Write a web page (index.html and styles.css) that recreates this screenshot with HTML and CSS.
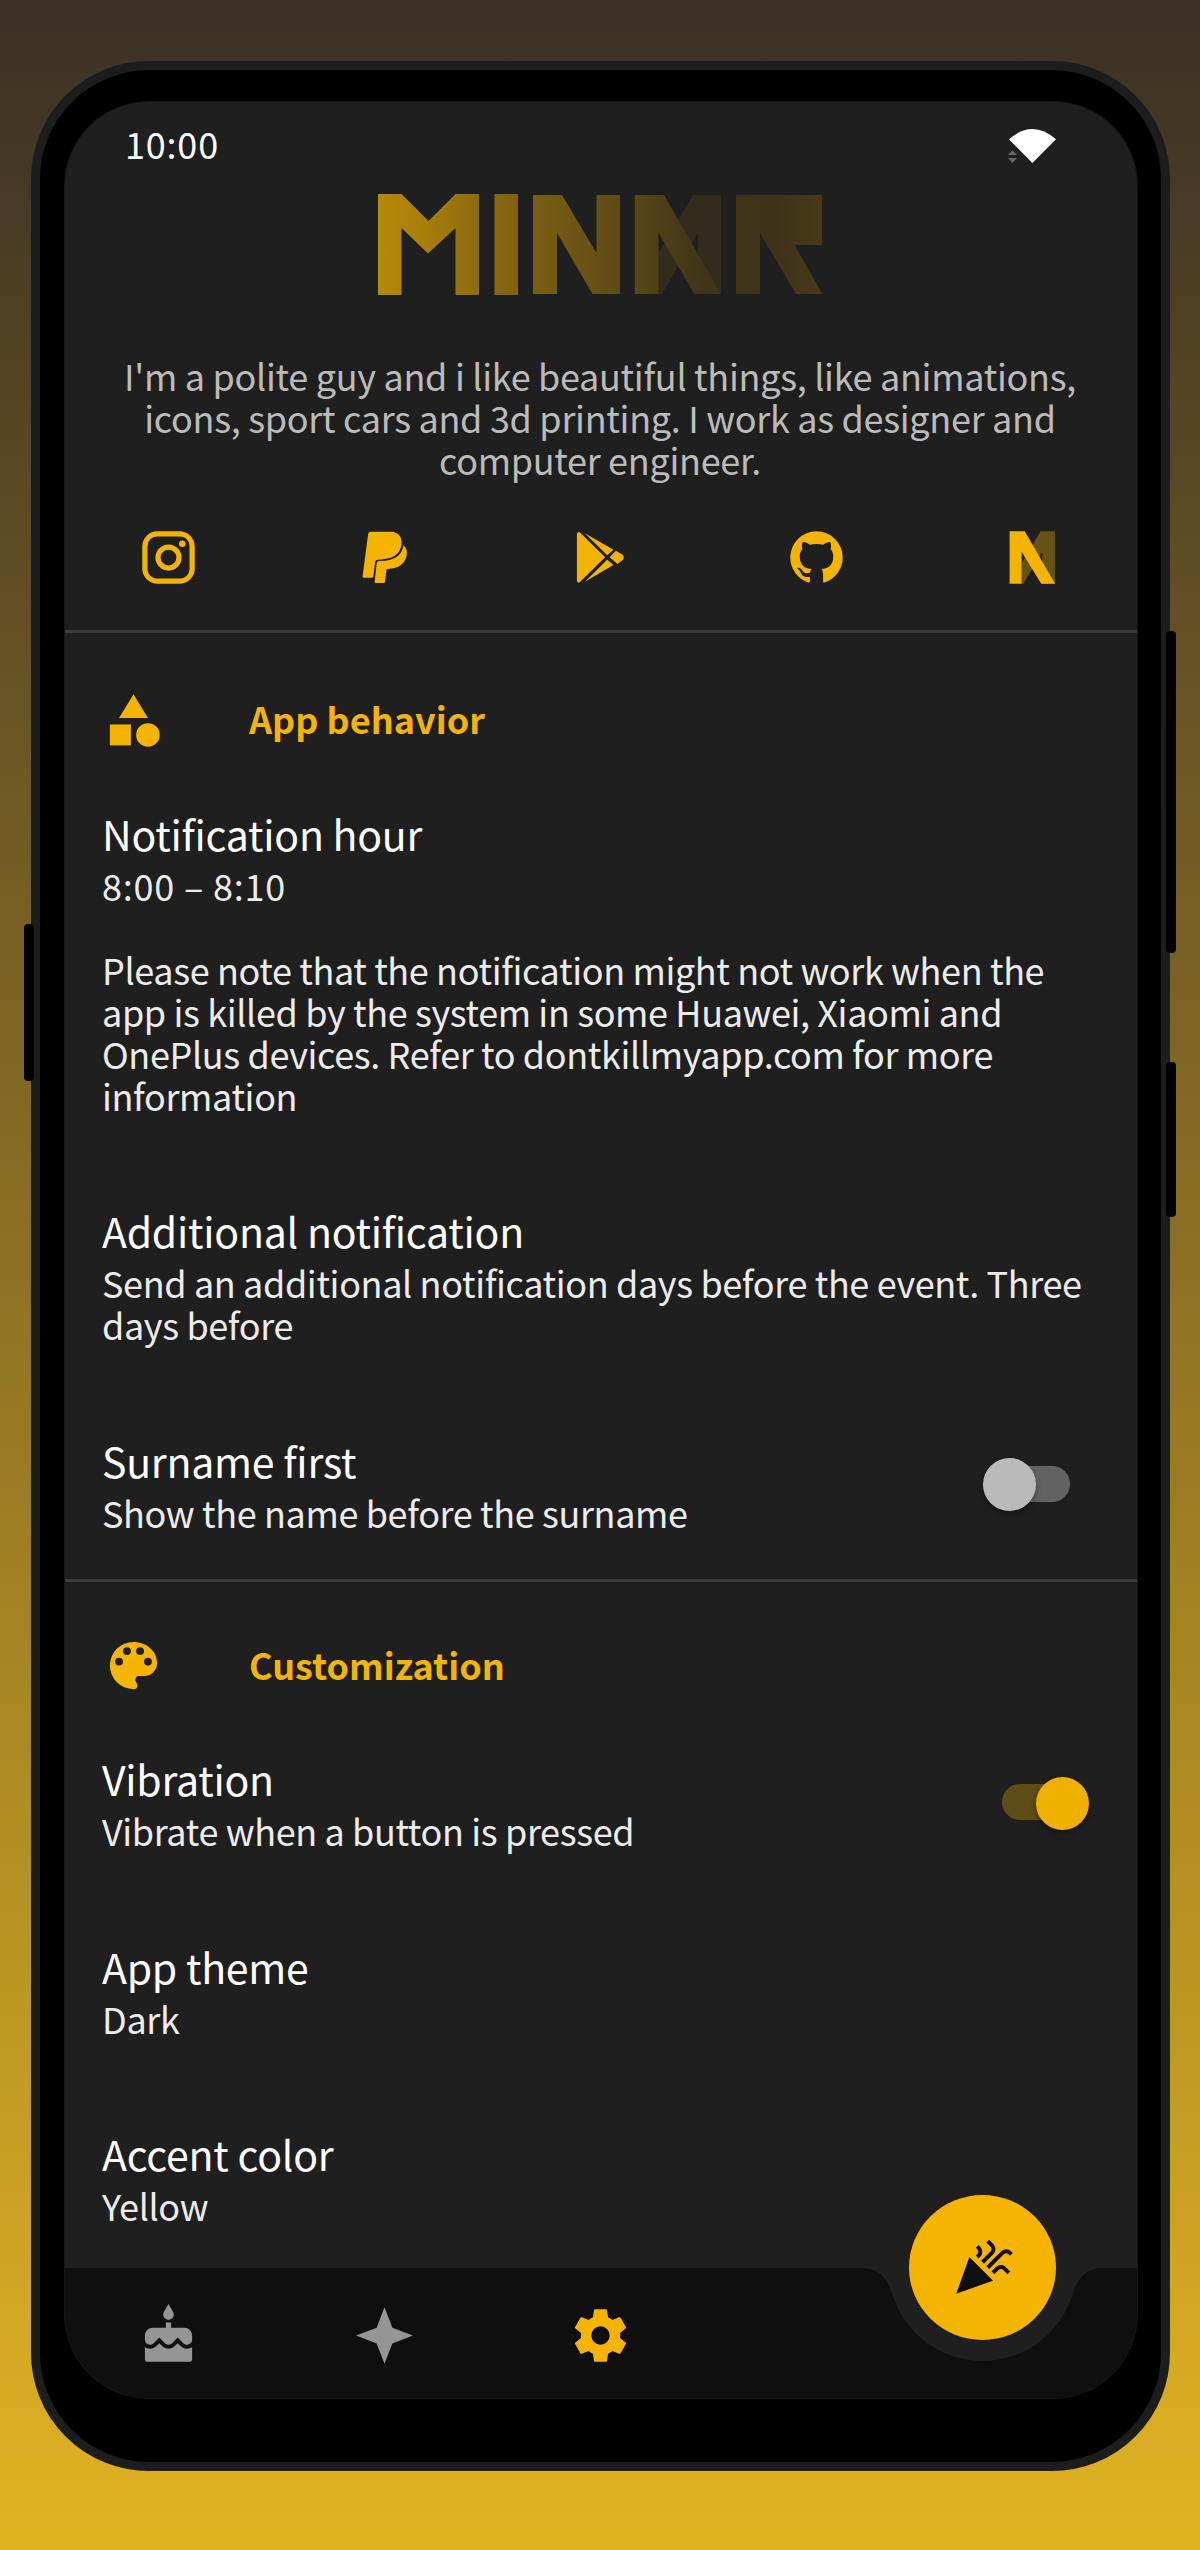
FILE: index.html
```html
<!DOCTYPE html>
<html lang="en">
<head>
<meta charset="utf-8">
<title>Settings</title>
<link rel="stylesheet" href="styles.css">
</head>
<body>
<div class="phone">
  <span class="key key-left"></span>
  <span class="key key-volume"></span>
  <span class="key key-power"></span>
  <div class="screen">
    <header class="status">
      <span class="clock">10:00</span>
      <svg class="wifi" viewBox="0 0 50 36"><path d="M4 11.3Q27.4 -9.3 51 11.3L27.4 35Z" fill="#fff"/><path d="M7.5 22.3L12 27H3ZM7.5 35L12 30H3Z" fill="#666"/></svg>
    </header>

    <svg class="logo" viewBox="378 194 444 101">
      <defs>
        <linearGradient id="gold" gradientUnits="userSpaceOnUse" x1="378" y1="0" x2="822" y2="0">
          <stop offset="0" stop-color="#b5880a"/>
          <stop offset=".1" stop-color="#a97f0b"/>
          <stop offset=".23" stop-color="#8c6a0f"/>
          <stop offset=".53" stop-color="#604c17"/>
          <stop offset=".73" stop-color="#40351a"/>
          <stop offset=".9" stop-color="#3e331a"/>
          <stop offset="1" stop-color="#483a19"/>
        </linearGradient>
      </defs>
      <path d="M721 195H693L658.500 253V294H662L698 233V294H721Z" fill="#332c1c"/>
      <g fill="url(#gold)">
        <path d="M378 194H401.500L428.500 221L455.500 194H479V295H455.500V228L428 253.500L401.500 228V295H378Z"/>
        <path d="M494.500 194H518V295H494.500Z"/>
        <path d="M533 195H562L596.500 253V195H620V294H592.500L557 233V294H533Z"/>
        <path d="M634.800 195H664L721 294H694.500L658.500 233V294H634.800Z"/>
        <path d="M736 195H822V245H794.500L822.500 294H796L760 233V294H736Z"/>
      </g>
    </svg>

    <p class="bio">I'm a polite guy and i like beautiful things, like animations,<br>icons, sport cars and 3d printing. I work as designer and<br>computer engineer.</p>

    <nav class="social">
      <svg class="icon" viewBox="0 0 24 24"><path d="M7.800 2H16.200C19.400 2 22 4.600 22 7.800V16.200A5.800 5.800 0 0 1 16.200 22H7.800C4.600 22 2 19.400 2 16.200V7.800A5.800 5.800 0 0 1 7.800 2M7.600 4A3.600 3.600 0 0 0 4 7.600V16.400C4 18.390 5.610 20 7.600 20H16.400A3.600 3.600 0 0 0 20 16.400V7.600C20 5.610 18.390 4 16.400 4H7.600M17.250 5.500A1.250 1.250 0 0 1 18.500 6.750A1.250 1.250 0 0 1 17.250 8A1.250 1.250 0 0 1 16 6.750A1.250 1.250 0 0 1 17.250 5.500M12 7A5 5 0 0 1 17 12A5 5 0 0 1 12 17A5 5 0 0 1 7 12A5 5 0 0 1 12 7M12 9A3 3 0 0 0 9 12A3 3 0 0 0 12 15A3 3 0 0 0 15 12A3 3 0 0 0 12 9Z"/></svg>
      <svg class="icon" viewBox="675 48 183 189" preserveAspectRatio="none"><path d="M727 65H785C808 66 818 82 816 102C812 135 790 148 748 149Q740 149 739 158L734 200Q733 203 730 203H706Q702 203 703 199L719 71Q720 65 727 65Z"/><path d="M822 106Q834 118 831 136C826 164 805 176 776 177Q773 177 772 181L768 216Q767 219 764 219H741Q737 219 738 215L744 158Q745 153 752 153C785 154 816 143 822 106Z"/></svg>
      <svg class="icon" viewBox="1302 48 183 189" preserveAspectRatio="none"><path d="M1330 66Q1325 68 1325 73V212Q1325 217 1330 218Q1333 218 1336 214L1407 142L1336 70Q1333 66 1330 66ZM1348 70L1431 119L1413 136ZM1348 215L1431 165L1413 149ZM1438 122L1458 134Q1464 142 1458 150L1443 162L1420 142Z"/></svg>
      <svg class="icon" viewBox="0 0 24 24"><path d="M12 2A10 10 0 0 0 2 12C2 16.420 4.870 20.170 8.840 21.500C9.340 21.580 9.500 21.270 9.500 21C9.500 20.770 9.500 20.140 9.500 19.310C6.730 19.910 6.140 17.970 6.140 17.970C5.680 16.810 5.030 16.500 5.030 16.500C4.120 15.880 5.100 15.900 5.100 15.900C6.100 15.970 6.630 16.930 6.630 16.930C7.500 18.450 8.970 18 9.540 17.760C9.630 17.110 9.890 16.670 10.170 16.420C7.950 16.170 5.620 15.310 5.620 11.500C5.620 10.390 6 9.500 6.650 8.790C6.550 8.540 6.200 7.500 6.750 6.150C6.750 6.150 7.590 5.880 9.500 7.170C10.290 6.950 11.150 6.840 12 6.840C12.850 6.840 13.710 6.950 14.500 7.170C16.410 5.880 17.250 6.150 17.250 6.150C17.800 7.500 17.450 8.540 17.350 8.790C18 9.500 18.380 10.390 18.380 11.500C18.380 15.320 16.040 16.160 13.810 16.410C14.170 16.720 14.500 17.330 14.500 18.260C14.500 19.600 14.500 20.680 14.500 21C14.500 21.270 14.660 21.590 15.170 21.500C19.140 20.160 22 16.420 22 12A10 10 0 0 0 12 2Z"/></svg>
      <svg class="icon" viewBox="1163 48 183 189" preserveAspectRatio="none"><path d="M1320 64H1278L1223 160V221H1228L1283 125V221H1320Z" fill="#655214"/><path d="M1188 64H1232L1320 221H1280L1223 125V221H1188Z"/></svg>
    </nav>

    <section class="group group-first">
      <h2 class="group-head">
        <svg class="icon" viewBox="0 0 24 24"><path d="M12 2L6.500 11H17.500Z"/><circle cx="17.500" cy="17.500" r="4.500"/><path d="M3 13.500H11V21.500H3Z"/></svg>
        <span class="group-name">App behavior</span>
      </h2>
      <div class="row"><div class="copy">
        <h3>Notification hour</h3>
        <p><span class="time">8:00 – 8:10</span><br><br>Please note that the notification might not work when the<br>app is killed by the system in some Huawei, Xiaomi and<br>OnePlus devices. Refer to dontkillmyapp.com for more<br>information</p>
      </div></div>
      <div class="row"><div class="copy">
        <h3>Additional notification</h3>
        <p>Send an additional notification days before the event. Three<br>days before</p>
      </div></div>
      <div class="row"><div class="copy">
        <h3>Surname first</h3>
        <p>Show the name before the surname</p>
      </div><span class="switch off"><i class="thumb"></i></span></div>
    </section>

    <section class="group group-last">
      <h2 class="group-head">
        <svg class="icon" viewBox="0 0 24 24"><path d="M17.500 12A1.500 1.500 0 0 1 16 10.500A1.500 1.500 0 0 1 17.500 9A1.500 1.500 0 0 1 19 10.500A1.500 1.500 0 0 1 17.500 12M14.500 8A1.500 1.500 0 0 1 13 6.500A1.500 1.500 0 0 1 14.500 5A1.500 1.500 0 0 1 16 6.500A1.500 1.500 0 0 1 14.500 8M9.500 8A1.500 1.500 0 0 1 8 6.500A1.500 1.500 0 0 1 9.500 5A1.500 1.500 0 0 1 11 6.500A1.500 1.500 0 0 1 9.500 8M6.500 12A1.500 1.500 0 0 1 5 10.500A1.500 1.500 0 0 1 6.500 9A1.500 1.500 0 0 1 8 10.500A1.500 1.500 0 0 1 6.500 12M12 3A9 9 0 0 0 3 12A9 9 0 0 0 12 21A1.500 1.500 0 0 0 13.500 19.500C13.500 19.110 13.350 18.760 13.110 18.500C12.880 18.230 12.730 17.880 12.730 17.500A1.500 1.500 0 0 1 14.230 16H16A5 5 0 0 0 21 11C21 6.580 16.970 3 12 3Z"/></svg>
        <span class="group-name">Customization</span>
      </h2>
      <div class="row"><div class="copy">
        <h3>Vibration</h3>
        <p>Vibrate when a button is pressed</p>
      </div><span class="switch on"><i class="thumb"></i></span></div>
      <div class="row"><div class="copy">
        <h3>App theme</h3>
        <p>Dark</p>
      </div></div>
      <div class="row"><div class="copy">
        <h3>Accent color</h3>
        <p>Yellow</p>
      </div></div>
    </section>

    <footer class="tabs">
      <svg class="tabs-shape" viewBox="65 2268 1072 130"><path d="M65 2268H862C879 2268 888 2279 892.500 2295A94.400 94.400 0 0 0 1072.500 2295C1077 2279 1086 2268 1103 2268H1137V2398H65Z"/></svg>
      <svg class="icon" viewBox="0 0 24 24"><path d="M12 6C13.110 6 14 5.100 14 4C14 3.620 13.900 3.270 13.710 2.970L12 0L10.290 2.970C10.100 3.270 10 3.620 10 4C10 5.100 10.900 6 12 6M16.600 16L15.530 14.920L14.450 16C13.150 17.290 10.870 17.300 9.560 16L8.500 14.920L7.400 16C6.750 16.640 5.880 17 4.960 17C4.230 17 3.560 16.770 3 16.390V21C3 21.550 3.450 22 4 22H20C20.550 22 21 21.550 21 21V16.390C20.440 16.770 19.770 17 19.040 17C18.120 17 17.250 16.640 16.600 16M18 9H13V7H11V9H6C4.340 9 3 10.340 3 12V13.540C3 14.620 3.880 15.500 4.960 15.500C5.500 15.500 6 15.300 6.340 14.930L8.500 12.800L10.610 14.930C11.350 15.670 12.640 15.670 13.380 14.930L15.500 12.800L17.650 14.930C18 15.300 18.500 15.500 19.030 15.500C20.110 15.500 21 14.620 21 13.540V12C21 10.340 19.660 9 18 9Z"/></svg>
      <svg class="icon" viewBox="0 0 24 24"><path d="M12 1.200L15 9L22.800 12L15 15L12 22.800L9 15L1.200 12L9 9Z"/></svg>
      <svg class="icon active" viewBox="0 0 24 24"><path d="M12 15.500A3.500 3.500 0 0 1 8.500 12A3.500 3.500 0 0 1 12 8.500A3.500 3.500 0 0 1 15.500 12A3.500 3.500 0 0 1 12 15.500M19.430 12.970C19.470 12.650 19.500 12.330 19.500 12C19.500 11.670 19.470 11.340 19.430 11L21.540 9.370C21.730 9.220 21.780 8.950 21.660 8.730L19.660 5.270C19.540 5.050 19.270 4.960 19.050 5.050L16.560 6.050C16.040 5.660 15.500 5.320 14.870 5.070L14.500 2.420C14.460 2.180 14.250 2 14 2H10C9.750 2 9.540 2.180 9.500 2.420L9.130 5.070C8.500 5.320 7.960 5.660 7.440 6.050L4.950 5.050C4.730 4.960 4.460 5.050 4.340 5.270L2.340 8.730C2.210 8.950 2.270 9.220 2.460 9.370L4.570 11C4.530 11.340 4.500 11.670 4.500 12C4.500 12.330 4.530 12.650 4.570 12.970L2.460 14.630C2.270 14.780 2.210 15.050 2.340 15.270L4.340 18.730C4.460 18.950 4.730 19.030 4.950 18.950L7.440 17.940C7.960 18.340 8.500 18.680 9.130 18.930L9.500 21.580C9.540 21.820 9.750 22 10 22H14C14.250 22 14.460 21.820 14.500 21.580L14.870 18.930C15.500 18.670 16.040 18.340 16.560 17.940L19.050 18.950C19.270 19.030 19.540 18.950 19.660 18.730L21.660 15.270C21.780 15.050 21.730 14.780 21.540 14.630L19.430 12.970Z"/></svg>
      <span class="fab">
        <svg class="icon" viewBox="0 0 24 24"><path d="M2 22L16 17L7 8ZM14.530 12.530l5.590-5.590c.49-.49 1.280-.49 1.770 0l.59.59 1.060-1.060-.59-.59c-1.070-1.070-2.820-1.070-3.890 0l-5.590 5.590ZM10.060 6.880l-.59.59 1.060 1.060.59-.59c1.070-1.070 1.070-2.820 0-3.890l-.59-.59-1.060 1.060.59.59c.48.490.48 1.290 0 1.770ZM17.060 11.880l-1.590 1.590 1.060 1.060 1.590-1.590c.49-.49 1.280-.49 1.770 0l1.610 1.610 1.060-1.060-1.610-1.610c-1.070-1.070-2.820-1.070-3.890 0ZM15.060 5.880l-3.590 3.590 1.060 1.060 3.590-3.590c1.070-1.070 1.070-2.820 0-3.890l-1.590-1.590-1.060 1.060 1.590 1.590c.48.490.48 1.290 0 1.770Z"/></svg>
      </span>
    </footer>
  </div>
</div>
</body>
</html>
```
FILE: styles.css
```css
* { box-sizing: border-box; }

body {
  margin: 0;
  height: 2550px;
  padding: 61px 30px 0 31px;
  background: linear-gradient(#3b3024, #e1b323);
  font-family: "Noto Sans CJK SC", "Noto Sans", sans-serif;
  color: #fff;
}

h2, h3, p { margin: 0; }

.icon {
  display: block;
  flex: none;
  width: 63px;
  height: 63px;
  fill: #f5b400;
}

/* Device frame */
.phone {
  position: relative;
  height: 2410px;
  padding: 32px 24px 64px 25px;
  border: 9px solid #1d1d1d;
  border-radius: 118px;
  background: #000;
}

.key {
  position: absolute;
  width: 10px;
  border-radius: 4px;
  background: #000;
}
.key-left { left: -16px; top: 854px; height: 157px; }
.key-volume { right: -15px; top: 561px; height: 322px; }
.key-power { right: -15px; top: 992px; height: 155px; }

.screen {
  display: flex;
  flex-direction: column;
  height: 2296px;
  overflow: hidden;
  border-radius: 84px;
  background: #1f1f1f;
  box-shadow: 0 0 0 1px #161616;
}
.screen > * { flex-shrink: 0; }

.status {
  display: flex;
  justify-content: space-between;
  align-items: center;
  height: 92px;
  padding: 0 82px 5px 60px;
}
.clock {
  padding-bottom: 6px;
  font-size: 36px;
  letter-spacing: .8px;
  line-height: 42px;
}
.wifi { width: 50px; height: 36px; overflow: visible; }

.logo {
  align-self: center;
  width: 444px;
  height: 101px;
  margin-right: 2px;
}

.bio {
  margin-top: 59px;
  padding-right: 2px;
  color: #bbb;
  font-size: 36px;
  letter-spacing: -.3px;
  line-height: 42px;
  text-align: center;
  white-space: nowrap;
}

.social {
  display: grid;
  grid-template-columns: repeat(5, 216px);
  justify-content: center;
  justify-items: center;
  margin-top: 46px;
  padding: 0 2px 41px 0;
}

/* Settings */
.group {
  display: flex;
  flex-direction: column;
  border-top: 3px solid #3b3b3b;
}
.group-first { padding: 3px 0 1px; }

.group-head {
  display: flex;
  align-items: center;
  gap: 84px;
  height: 127px;
  padding: 42px 0 1px 37px;
  color: #f5b400;
  font-size: 36px;
  font-weight: 700;
  line-height: 42px;
}
.group-name { padding-bottom: 4px; }

.row {
  display: flex;
  align-items: center;
  justify-content: space-between;
  padding: 44.75px 48px 44.75px 37px;
}
.group-last .row:last-child { padding-bottom: 35px; }

.copy { display: flex; flex-direction: column; gap: 6px; white-space: nowrap; }
.copy h3 {
  font-size: 41px;
  font-weight: 400;
  letter-spacing: -.24px;
  line-height: 50px;
}
.copy p {
  color: #ececec;
  font-size: 36px;
  letter-spacing: -.37px;
  line-height: 42px;
}
.copy .time { letter-spacing: .8px; }

.switch {
  display: flex;
  align-items: center;
  width: 83px;
  height: 36px;
  border-radius: 18px;
}
.thumb {
  flex: none;
  width: 53px;
  height: 53px;
  margin-top: 2px;
  border-radius: 50%;
  box-shadow: 0 3px 6px rgba(0, 0, 0, .35);
}
.off { margin-right: 19px; background: #636363; }
.off .thumb { margin-left: -4px; background: #bababa; }
.on { justify-content: flex-end; margin-right: 4px; background: #604c17; }
.on .thumb { margin-right: -4px; background: #f0b000; }

/* Bottom bar */
.tabs {
  position: relative;
  display: grid;
  grid-template-columns: repeat(5, 216px);
  justify-content: center;
  justify-items: center;
  align-items: center;
  height: 130px;
  margin-top: auto;
  padding: 4px 2px 0 0;
}
.tabs-shape {
  position: absolute;
  inset: 0;
  width: 1072px;
  height: 130px;
  fill: #0f0f0f;
}
.tabs .icon { position: relative; fill: #959595; }
.tabs .active { fill: #f5b400; }

.fab {
  position: absolute;
  left: 844px;
  top: -73px;
  display: grid;
  place-items: center;
  width: 147px;
  height: 145px;
  border-radius: 50%;
  background: #f5b400;
}
.tabs .fab .icon { fill: #0f0f0f; }
```
